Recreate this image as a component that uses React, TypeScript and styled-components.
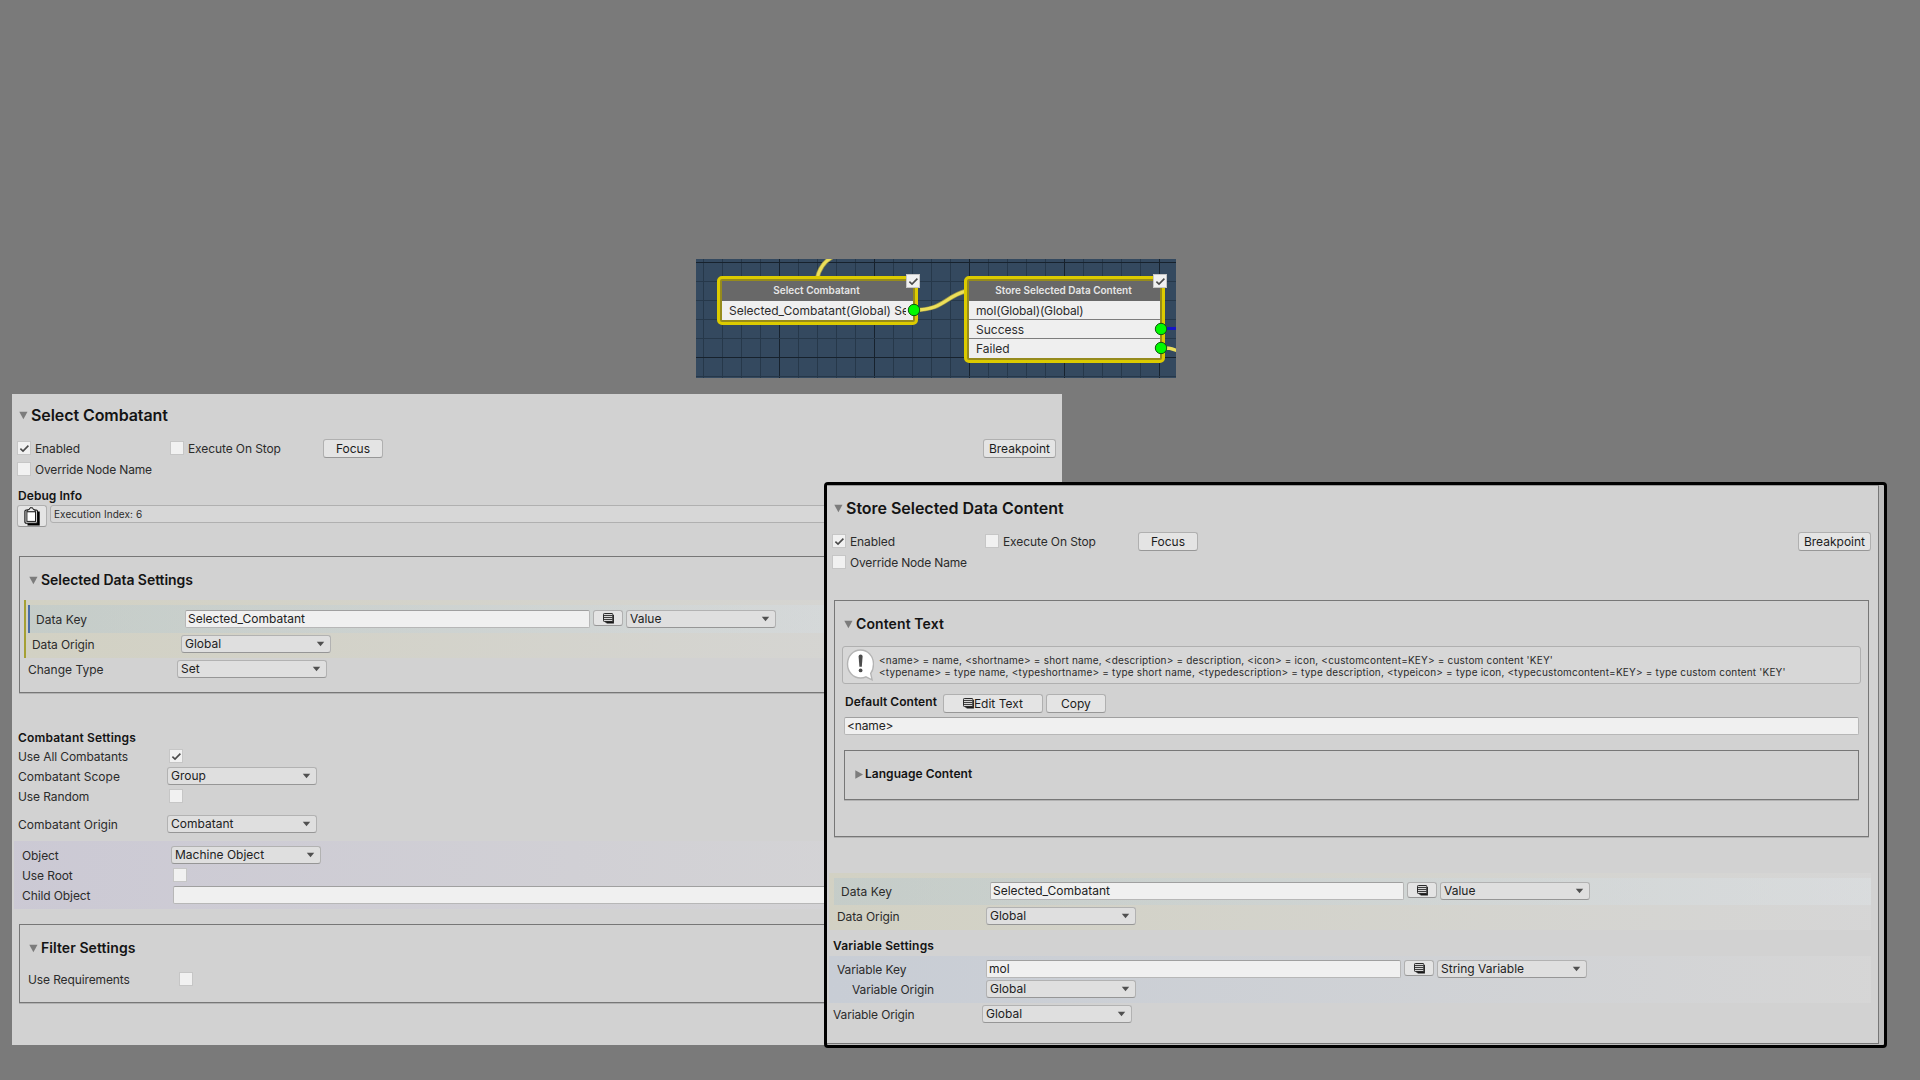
import React from "react";
import styled, { createGlobalStyle } from "styled-components";

const GlobalStyle = createGlobalStyle`
  * { box-sizing: border-box; }
  body { margin: 0; overflow: hidden; }
`;

const Desktop = styled.main`
  position: relative;
  width: 1920px;
  height: 1080px;
  overflow: hidden;
  background: #7a7a7a;
  color: #2b2b2b;
  font: 12px/16px Inter, "Noto Sans", sans-serif;
  white-space: nowrap;
`;

/* ---------- node graph ---------- */

const Graph = styled.section`
  position: absolute;
  left: 696px;
  top: 259px;
  width: 480px;
  height: 119px;
  overflow: hidden;
  background: #34495f;
`;

const GraphSvg = styled.svg`
  position: absolute;
  inset: 0;
`;

const Node = styled.div<{ $x: number; $w: number }>`
  position: absolute;
  left: ${(p) => p.$x}px;
  top: 17px;
  width: ${(p) => p.$w}px;
  padding: 2px;
  border: 3px solid #dccb00;
  border-radius: 5px;
  background: #968b1c;
`;

const NodeTitle = styled.div`
  height: 20px;
  padding: 2px 2px 0 0;
  background: #686868;
  color: #e6e6e6;
  font-size: 10px;
  font-weight: 600;
  line-height: 14px;
  text-align: center;
`;

const NodeRow = styled.div<{ $track?: number }>`
  height: 19px;
  padding: 1px 0 0 7px;
  background: #efefef;
  border-bottom: 1px solid #7d7d7d;
  letter-spacing: ${(p) => p.$track ?? 0}px;
  line-height: 18px;
  &:last-of-type { border-bottom: 0; }
`;

const NodeText = styled.div`
  width: 177px;
  overflow: hidden;
`;

const NodeCheck = styled.div<{ $x: number }>`
  position: absolute;
  left: ${(p) => p.$x}px;
  top: 16px;
`;

/* ---------- inspector parts ---------- */

const Column = styled.div<{ $pt?: number }>`
  display: flex;
  flex-direction: column;
  padding-top: ${(p) => p.$pt ?? 0}px;
`;

const CombatantPanel = styled.section`
  position: absolute;
  left: 12px;
  top: 394px;
  width: 1050px;
  height: 651px;
  overflow: hidden;
  background: #d2d2d2;
`;

const StorePanel = styled.section`
  position: absolute;
  left: 824px;
  top: 482px;
  width: 1063px;
  height: 566px;
  padding-right: 5px;
  border: 3px solid #000;
  border-radius: 4px;
  background: #bdbdbd;
`;

const StoreBody = styled.div`
  height: 559px;
  padding-left: 1px;
  border: 1px solid #777;
  border-width: 1px 1px 1px 0;
  border-top-color: #999;
  background: #d2d2d2;
`;

const Row = styled.div<{ $mt?: number; $h?: number; $pl?: number }>`
  display: flex;
  align-items: center;
  flex: none;
  height: ${(p) => p.$h ?? 18}px;
  margin-top: ${(p) => p.$mt ?? 0}px;
  padding-left: ${(p) => p.$pl ?? 0}px;
`;

const Label = styled.span<{ $w: number; $track?: number }>`
  flex: none;
  width: ${(p) => p.$w}px;
  padding-top: 2px;
  letter-spacing: ${(p) => p.$track ?? -0.1}px;
`;

const Heading = styled.span<{ $size: number; $track?: number; $ml?: number }>`
  flex: none;
  margin-left: ${(p) => p.$ml ?? 0}px;
  color: #141414;
  font-size: ${(p) => p.$size}px;
  font-weight: 600;
  letter-spacing: ${(p) => p.$track ?? 0}px;
`;

const Box = styled.div<{ $mt: number; $ml: number; $w: number; $h: number }>`
  display: flex;
  flex-direction: column;
  flex: none;
  width: ${(p) => p.$w}px;
  height: ${(p) => p.$h}px;
  margin: ${(p) => p.$mt}px 0 0 ${(p) => p.$ml}px;
  border: 1px solid #777;
  box-shadow: 0 1px 0 #b2b2b2;
`;

const CheckFrame = styled.span<{ $mr?: number }>`
  display: flex;
  align-items: center;
  justify-content: center;
  flex: none;
  width: 12px;
  height: 12px;
  margin-right: ${(p) => p.$mr ?? 0}px;
  background: #f1f1f1;
  box-shadow: 0 0 0 1px #c6c6c6;
`;

const Button = styled.span<{ $w: number; $h?: number; $ml?: number; $mt?: number }>`
  display: flex;
  align-items: center;
  justify-content: center;
  flex: none;
  width: ${(p) => p.$w}px;
  height: ${(p) => p.$h ?? 19}px;
  margin: ${(p) => p.$mt ?? 0}px 0 0 ${(p) => p.$ml ?? 0}px;
  border: 1px solid #b0b0b0;
  border-bottom-color: #979797;
  border-radius: 3px;
  background: #e4e4e4;
  color: #1c1c1c;
`;

const SelectFrame = styled.span<{ $ml?: number }>`
  display: flex;
  align-items: center;
  justify-content: space-between;
  flex: none;
  width: 150px;
  height: 18px;
  margin-left: ${(p) => p.$ml ?? 0}px;
  padding: 0 5px 0 3px;
  border: 1px solid #b2b2b2;
  border-bottom-color: #969696;
  border-radius: 3px;
  background: #dfdfdf;
  color: #222;
`;

const Field = styled.span<{ $w: number; $ml?: number; $track?: number }>`
  flex: none;
  width: ${(p) => p.$w}px;
  height: 18px;
  margin-left: ${(p) => p.$ml ?? 0}px;
  padding-left: 2px;
  border: 1px solid #b7b7b7;
  border-top-color: #a0a0a0;
  border-radius: 2px;
  background: #f0f0f0;
  color: #222;
  letter-spacing: ${(p) => p.$track ?? 0}px;
`;

const Band = styled.div<{ $mt: number; $ml: number; $pt?: number; $h: number; $w: number; $rgb: string; $alpha: number; $bar?: string; $end?: string }>`
  display: flex;
  flex-direction: column;
  flex: none;
  width: ${(p) => p.$w}px;
  height: ${(p) => p.$h}px;
  margin: ${(p) => p.$mt}px 0 0 ${(p) => p.$ml}px;
  padding-top: ${(p) => p.$pt ?? 0}px;
  border-left: ${(p) => (p.$bar ? `2px solid ${p.$bar}` : "0")};
  background: linear-gradient(90deg, rgba(${(p) => p.$rgb}, ${(p) => p.$alpha}), ${(p) => p.$end ?? "rgba(225,225,225,.25)"});
`;

const InfoStrip = styled.span`
  width: 1000px;
  height: 18px;
  margin: -4px 0 0 3px;
  padding-left: 3px;
  border: 1px solid #b0b0b0;
  border-radius: 3px;
  background: #d7d7d7;
  font-size: 10px;
  letter-spacing: 0.08px;
`;

const HelpBox = styled.div`
  display: flex;
  align-items: center;
  flex: none;
  width: 1019px;
  height: 38px;
  margin: 12px 0 0 7px;
  padding-left: 3px;
  border: 1px solid #b0b0b0;
  border-radius: 3px;
  background: #d7d7d7;
  font-size: 10px;
  line-height: 12px;
  letter-spacing: 0.183px;
`;

const HelpLines = styled.div`
  padding: 1px 0 0 5px;
`;

/* ---------- drawings ---------- */

const CheckMark = () => (
  <svg width="11" height="11" viewBox="0 0 11 11">
    <path d="M1.4 5.6 4 8.1 9.4 2.6" fill="none" stroke="#4a4a4a" strokeWidth="1.6" />
  </svg>
);

const Check = ({ on, mr }: { on?: boolean; mr?: number }) => (
  <CheckFrame $mr={mr}>{on && <CheckMark />}</CheckFrame>
);

const Caret = () => (
  <svg width="9" height="6" viewBox="0 0 9 6">
    <path d="M.8.8H8.2L4.5 5.2Z" fill="#505050" />
  </svg>
);

const FoldDown = () => (
  <svg width="9" height="9" viewBox="0 0 9 9">
    <path d="M.3.8H8.5L4.4 8.2Z" fill="#7c7c7c" />
  </svg>
);

const FoldRight = () => (
  <svg width="9" height="9" viewBox="0 0 9 9">
    <path d="M.3.3V8.7L8 4.5Z" fill="#7c7c7c" />
  </svg>
);

const Select = ({ value, ml }: { value: string; ml?: number }) => (
  <SelectFrame $ml={ml}>
    {value}
    <Caret />
  </SelectFrame>
);

const ListIcon = () => (
  <svg width="11" height="11" viewBox="0 0 11 11">
    <path d="M2.4 8H9.600V2H10.900V10.600H3.600V9.800H2.400Z" fill="#1a1a1a" />
    <rect x=".5" y=".5" width="9.3" height="8" rx=".8" fill="#d6d6d6" stroke="#2a2a2a" />
    <path d="M1 2.500H9.500M1 4.500H9.500M1 6.500H9.500" stroke="#2e2e2e" strokeWidth=".9" />
  </svg>
);

const ClipboardIcon = () => (
  <svg width="16" height="19" viewBox="0 0 16 19">
    <path d="M3.5 16H13V4.5H15.7V18.6H3.5Z" fill="#000" />
    <rect x=".9" y="3" width="12.6" height="13.2" rx="1.3" fill="#ddd" stroke="#111" strokeWidth="1.1" />
    <path d="M3.2 5V3.2L5.3 2.5 6 .8H8.6L9.3 2.5 11.2 3.2V5Z" fill="#eee" stroke="#111" />
    <rect x="2.9" y="4.8" width="8.6" height="9.6" fill="#fff" stroke="#222" strokeWidth="1" />
  </svg>
);

const AlertIcon = () => (
  <svg width="28" height="32" viewBox="0 0 28 32">
    <path d="M14.500 1C7.300 1 1.500 7 1.500 15s5.800 14 13 14c2 0 3.800-.4 5.400-1.200L26.100 30.800 24.700 24.400C26.500 22 27.500 18.600 27.500 15 27.500 7 21.700 1 14.500 1Z" fill="#fff" stroke="#b4b4b4" strokeWidth="1.400" />
    <path d="M12.600 7.600a2 2 0 0 1 4 0L15.800 17.800h-2.400Z" fill="#4c4c4c" />
    <circle cx="14.600" cy="21.400" r="1.900" fill="#4c4c4c" />
  </svg>
);

const minorX = Array.from({ length: 26 }, (_, i) => 7.5 + i * 19);
const minorY = Array.from({ length: 7 }, (_, i) => 3.5 + i * 19);

const Grid = () => (
  <GraphSvg width="480" height="119">
    {minorX.map((x, i) => (
      <path key={x} d={`M${x} 0V119`} stroke={i % 5 === 4 ? "#17222d" : "#26384a"} />
    ))}
    {minorY.map((y, i) => (
      <path key={y} d={`M0 ${y}H480`} stroke={i % 5 === 0 ? "#17222d" : "#26384a"} />
    ))}
    <g fill="none" strokeLinecap="round">
      <path d="M121 20C123 10 128 2 138 -3" stroke="#9d9648" strokeWidth="4.500" />
      <path d="M121 20C123 10 128 2 138 -3" stroke="#ecdf5a" strokeWidth="3" />
      <path d="M218 51C248 51 248 38 270 32" stroke="#9d9648" strokeWidth="4.500" />
      <path d="M218 51C248 51 248 38 270 32" stroke="#ecdf5a" strokeWidth="3" />
      <path d="M465 69.500H482" stroke="#1414c8" strokeWidth="3" />
      <path d="M465 89C474 89 474 89 482 92" stroke="#ecdf5a" strokeWidth="3.500" />
    </g>
  </GraphSvg>
);

const Ports = () => (
  <GraphSvg width="480" height="119">
    {[[218, 51], [465, 70], [465, 89]].map(([cx, cy]) => (
      <circle key={cx + cy} cx={cx} cy={cy} r="5.700" fill="#00fa00" stroke="#0c5a0c" />
    ))}
  </GraphSvg>
);

/* ---------- composition ---------- */

const PanelHead = ({ title, track, inset }: { title: string; track: number; inset: number }) => (
  <>
    <Row $h={20} $pl={inset + 1}>
      <FoldDown />
      <Heading $size={16} $track={track} $ml={3}>{title}</Heading>
    </Row>
    <Row $mt={14} $pl={inset}>
      <Check on mr={5} />
      <Label $w={136}>Enabled</Label>
      <Check mr={5} />
      <Label $w={135}>Execute On Stop</Label>
      <Button $w={60} $mt={1}>Focus</Button>
      <Button $w={73} $ml={600} $mt={1}>Breakpoint</Button>
    </Row>
    <Row $mt={3} $pl={inset}>
      <Check mr={5} />
      <Label $w={136} $track={-0.17}>Override Node Name</Label>
    </Row>
  </>
);

export default function App() {
  return (
    <>
      <GlobalStyle />
      <Desktop>
        <Graph>
          <Grid />
          <Node $x={21} $w={201}>
            <NodeTitle>Select Combatant</NodeTitle>
            <NodeRow><NodeText>Selected_Combatant(Global) Se</NodeText></NodeRow>
          </Node>
          <Node $x={268} $w={201}>
            <NodeTitle>Store Selected Data Content</NodeTitle>
            <NodeRow $track={-0.15}>mol(Global)(Global)</NodeRow>
            <NodeRow>Success</NodeRow>
            <NodeRow>Failed</NodeRow>
          </Node>
          <NodeCheck $x={211}><Check on /></NodeCheck>
          <NodeCheck $x={458}><Check on /></NodeCheck>
          <Ports />
        </Graph>

        <CombatantPanel>
          <Column $pt={11}>
            <PanelHead title="Select Combatant" track={-0.08} inset={6} />
            <Row $mt={8} $h={20} $pl={6}>
              <Heading $size={12} $track={0.06}>Debug Info</Heading>
            </Row>
            <Row $mt={-1} $h={22} $pl={5}>
              <Button $w={30} $h={22}><ClipboardIcon /></Button>
              <InfoStrip>Execution Index: 6</InfoStrip>
            </Row>

            <Box $mt={29} $ml={7} $w={1030} $h={137}>
              <Row $mt={13} $h={20} $pl={9}>
                <FoldDown />
                <Heading $size={14} $track={-0.05} $ml={3}>Selected Data Settings</Heading>
              </Row>
              <Band $mt={10} $ml={4} $w={1020} $h={58} $pt={5} $rgb="210,206,150" $alpha={0.24} $bar="#a5a033">
                <Band $mt={0} $ml={2} $w={1010} $h={28} $rgb="178,198,208" $alpha={0.4} $bar="#4a6ea6" $end="rgba(222,228,232,.4)">
                  <Row $mt={5} $pl={6}>
                    <Label $w={149} $track={0.05}>Data Key</Label>
                    <Field $w={405}>Selected_Combatant</Field>
                    <Button $w={30} $h={16} $ml={3} $mt={-2}><ListIcon /></Button>
                    <Select value="Value" ml={3} />
                  </Row>
                </Band>
                <Row $mt={2} $pl={6}>
                  <Label $w={149}>Data Origin</Label>
                  <Select value="Global" />
                </Row>
              </Band>
              <Row $mt={2} $pl={8}>
                <Label $w={149} $track={0}>Change Type</Label>
                <Select value="Set" />
              </Row>
            </Box>

            <Row $mt={35} $h={20} $pl={6}>
              <Heading $size={12} $track={0.18}>Combatant Settings</Heading>
            </Row>
            <Row $mt={-1} $h={18} $pl={6}>
              <Label $w={152}>Use All Combatants</Label>
              <Check on />
            </Row>
            <Row $mt={2} $pl={6}>
              <Label $w={149} $track={0}>Combatant Scope</Label>
              <Select value="Group" />
            </Row>
            <Row $mt={2} $pl={6}>
              <Label $w={152}>Use Random</Label>
              <Check />
            </Row>
            <Row $mt={10} $pl={6}>
              <Label $w={149} $track={0}>Combatant Origin</Label>
              <Select value="Combatant" />
            </Row>
            <Band $mt={8} $ml={2} $w={1036} $h={68} $rgb="198,194,214" $alpha={0.55}>
              <Row $mt={5} $pl={8}>
                <Label $w={149}>Object</Label>
                <Select value="Machine Object" />
              </Row>
              <Row $mt={2} $pl={8}>
                <Label $w={152}>Use Root</Label>
                <Check />
              </Row>
              <Row $mt={2} $pl={8}>
                <Label $w={151}>Child Object</Label>
                <Field $w={860} />
              </Row>
            </Band>

            <Box $mt={15} $ml={7} $w={1030} $h={79}>
              <Row $mt={13} $h={20} $pl={9}>
                <FoldDown />
                <Heading $size={14} $track={0.07} $ml={3}>Filter Settings</Heading>
              </Row>
              <Row $mt={12} $pl={8}>
                <Label $w={152} $track={-0.12}>Use Requirements</Label>
                <Check />
              </Row>
            </Box>
          </Column>
        </CombatantPanel>

        <StorePanel>
          <StoreBody>
            <Column $pt={12}>
              <PanelHead title="Store Selected Data Content" track={-0.03} inset={5} />
              <Box $mt={29} $ml={6} $w={1035} $h={237}>
                <Row $mt={13} $h={20} $pl={9}>
                  <FoldDown />
                  <Heading $size={14} $track={0.1} $ml={3}>Content Text</Heading>
                </Row>
                <HelpBox>
                  <AlertIcon />
                  <HelpLines>
                    <div>{"<name> = name, <shortname> = short name, <description> = description, <icon> = icon, <customcontent=KEY> = custom content 'KEY'"}</div>
                    <div>{"<typename> = type name, <typeshortname> = type short name, <typedescription> = type description, <typeicon> = type icon, <typecustomcontent=KEY> = type custom content 'KEY'"}</div>
                  </HelpLines>
                </HelpBox>
                <Row $mt={8} $h={20} $pl={10}>
                  <Heading $size={12} $track={0.04}>Default Content</Heading>
                  <Button $w={100} $ml={6} $mt={3}><ListIcon />Edit Text</Button>
                  <Button $w={60} $ml={3} $mt={3}>Copy</Button>
                </Row>
                <Row $mt={5} $pl={9}>
                  <Field $w={1015} $track={-0.15}>{"<name>"}</Field>
                </Row>
                <Box $mt={15} $ml={9} $w={1015} $h={50}>
                  <Row $mt={13} $h={20} $pl={10}>
                    <FoldRight />
                    <Heading $size={12} $track={0.03} $ml={1}>Language Content</Heading>
                  </Row>
                </Box>
              </Box>

              <Band $mt={36} $ml={1} $w={1042} $h={57} $pt={5} $rgb="210,206,150" $alpha={0.24}>
                <Band $mt={0} $ml={5} $w={1037} $h={27} $rgb="178,198,208" $alpha={0.4} $end="rgba(222,228,232,.4)">
                  <Row $mt={4} $pl={7}>
                    <Label $w={149} $track={0.05}>Data Key</Label>
                    <Field $w={414}>Selected_Combatant</Field>
                    <Button $w={30} $h={16} $ml={3} $mt={-2}><ListIcon /></Button>
                    <Select value="Value" ml={3} />
                  </Row>
                </Band>
                <Row $mt={2} $pl={8}>
                  <Label $w={149}>Data Origin</Label>
                  <Select value="Global" />
                </Row>
              </Band>
              <Row $mt={6} $h={20} $pl={5}>
                <Heading $size={12} $track={0.17}>Variable Settings</Heading>
              </Row>
              <Band $mt={0} $ml={1} $w={1042} $h={47} $rgb="190,200,216" $alpha={0.5}>
                <Row $mt={4} $pl={8}>
                  <Label $w={149}>Variable Key</Label>
                  <Field $w={415}>mol</Field>
                  <Button $w={30} $h={16} $ml={3} $mt={-2}><ListIcon /></Button>
                  <Select value="String Variable" ml={3} />
                </Row>
                <Row $mt={2} $pl={23}>
                  <Label $w={134}>Variable Origin</Label>
                  <Select value="Global" />
                </Row>
              </Band>
              <Row $mt={2} $pl={5}>
                <Label $w={149} $track={-0.13}>Variable Origin</Label>
                <Select value="Global" />
              </Row>
            </Column>
          </StoreBody>
        </StorePanel>
      </Desktop>
    </>
  );
}
